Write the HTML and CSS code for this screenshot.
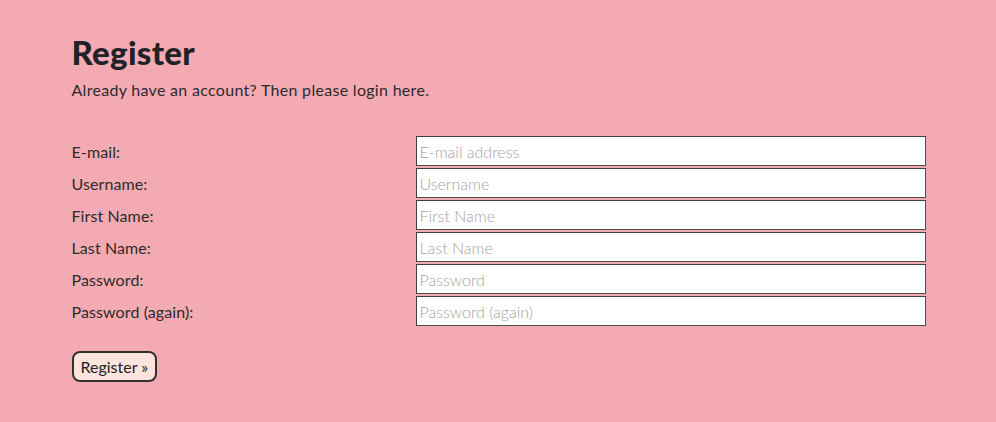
FILE: index.html
```html
<!DOCTYPE html>
<html>
<head>
<meta charset="utf-8">
<link rel="stylesheet" href="styles.css">
</head>
<body>
<main class="container">
  <h1 class="title">Register</h1>
  <p class="lead">Already have an account? Then please login here.</p>
  <form class="form">
    <div class="fields">
      <label class="label" for="email">E-mail:</label>
      <input class="input" id="email" type="email" placeholder="E-mail address">
      <label class="label" for="username">Username:</label>
      <input class="input" id="username" type="text" placeholder="Username">
      <label class="label" for="first">First Name:</label>
      <input class="input" id="first" type="text" placeholder="First Name">
      <label class="label" for="last">Last Name:</label>
      <input class="input" id="last" type="text" placeholder="Last Name">
      <label class="label" for="pw1">Password:</label>
      <input class="input" id="pw1" type="password" placeholder="Password">
      <label class="label" for="pw2">Password (again):</label>
      <input class="input" id="pw2" type="password" placeholder="Password (again)">
    </div>
    <button class="btn" type="submit">Register »</button>
  </form>
</main>
</body>
</html>
```

FILE: styles.css
```css
html, body {
  margin: 0;
  padding: 0;
}
body {
  background: #f4aab3;
  color: #2c2a2c;
  font-family: "Lato", "Noto Sans", sans-serif;
  font-size: 16px;
  height: 422px;
}
.container {
  width: 854px;
  margin: 0 auto;
  padding-top: 32px;
  padding-left: 1px;
}
.title {
  margin: 0;
  font-family: "Lato", sans-serif;
  font-weight: 900;
  font-size: 33px;
  line-height: 40px;
  color: #212227;
  letter-spacing: 0.3px;
}
.lead {
  margin: 8px 0 0;
  line-height: 20px;
  font-size: 16px;
  letter-spacing: 0.3px;
}
.form {
  margin-top: 36px;
}
.fields {
  display: grid;
  grid-template-columns: 344px 510px;
  row-gap: 2px;
  align-items: center;
}
.label {
  font-size: 16px;
  letter-spacing: 0.1px;
}
.input {
  box-sizing: border-box;
  height: 30px;
  width: 510px;
  margin: 0;
  padding: 0 3px;
  border: 1px solid #4d4d4d;
  border-top-color: #3f3f3f;
  border-left-color: #3f3f3f;
  background: #fff;
  font-family: "Lato", sans-serif;
  font-size: 16px;
  font-weight: 300;
  color: #333;
  outline: none;
}
.input::placeholder {
  color: #a3a3a3;
}
.btn {
  display: block;
  margin-top: 25px;
  box-sizing: border-box;
  height: 31px;
  padding: 0 7px;
  border: 2px solid #303030;
  border-radius: 8px;
  background: #fde4dc;
  color: #222;
  font-family: "Lato", sans-serif;
  font-size: 16px;
  cursor: pointer;
}
```
